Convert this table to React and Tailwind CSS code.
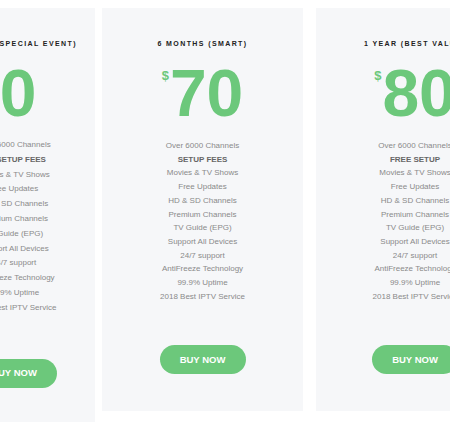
import React from 'react';

const features = [
  'Over 6000 Channels',
  null,
  'Movies & TV Shows',
  'Free Updates',
  'HD & SD Channels',
  'Premium Channels',
  'TV Guide (EPG)',
  'Support All Devices',
  '24/7 support',
  'AntiFreeze Technology',
  '99.9% Uptime',
  '2018 Best IPTV Service',
];

const plans = [
  {
    title: '1 MONTH (SPECIAL EVENT)',
    price: '0',
    setup: 'NO SETUP FEES',
    card: 'w-[162px] h-[430px] mr-[7px]',
    leading: 'leading-[14.8px] mt-[12px]',
    button: 'mt-[43px]',
  },
  {
    title: '6 MONTHS (SMART)',
    price: '70',
    setup: 'SETUP FEES',
    card: 'w-[201px] h-[403px] mr-[13px]',
    leading: 'leading-[13.7px] mt-[13px]',
    button: 'mt-[42px]',
  },
  {
    title: '1 YEAR (BEST VALUE)',
    price: '80',
    setup: 'FREE SETUP',
    card: 'w-[198px] h-[403px]',
    leading: 'leading-[13.7px] mt-[13px]',
    button: 'mt-[42px]',
  },
];

function PlanCard({ plan }) {
  return (
    <div className={`${plan.card} shrink-0 bg-[#f6f7f9] flex flex-col items-center pt-[31px]`}>
      <h3 className="text-[7px] leading-[10px] font-bold tracking-[0.2em] text-[#222] whitespace-nowrap">
        {plan.title}
      </h3>

      <div className="flex items-start mt-[11px]">
        <span className="text-[13px] leading-none font-bold text-[#6cc87b] mt-[9px] mr-[1px]">$</span>
        <span className="text-[66px] leading-none font-bold text-[#6cc87b]">{plan.price}</span>
      </div>

      <ul className={`${plan.leading} text-[8px] text-[#8a8a8a] text-center whitespace-nowrap`}>
        {features.map((f, i) =>
          f === null ? (
            <li key={i} className="font-bold text-[#666]">{plan.setup}</li>
          ) : (
            <li key={i}>{f}</li>
          )
        )}
      </ul>

      <button className={`${plan.button} w-[86px] h-[29px] rounded-full bg-[#6cc87b] text-white text-[9.5px] font-bold`}>
        BUY NOW
      </button>
    </div>
  );
}

export default function App() {
  return (
    <div className="w-[450px] h-[422px] overflow-hidden bg-white font-['Liberation_Sans',Arial,sans-serif]">
      <div className="flex items-start ml-[-67px] pt-2 w-[700px]">
        {plans.map((p) => (
          <PlanCard key={p.title} plan={p} />
        ))}
      </div>
    </div>
  );
}
